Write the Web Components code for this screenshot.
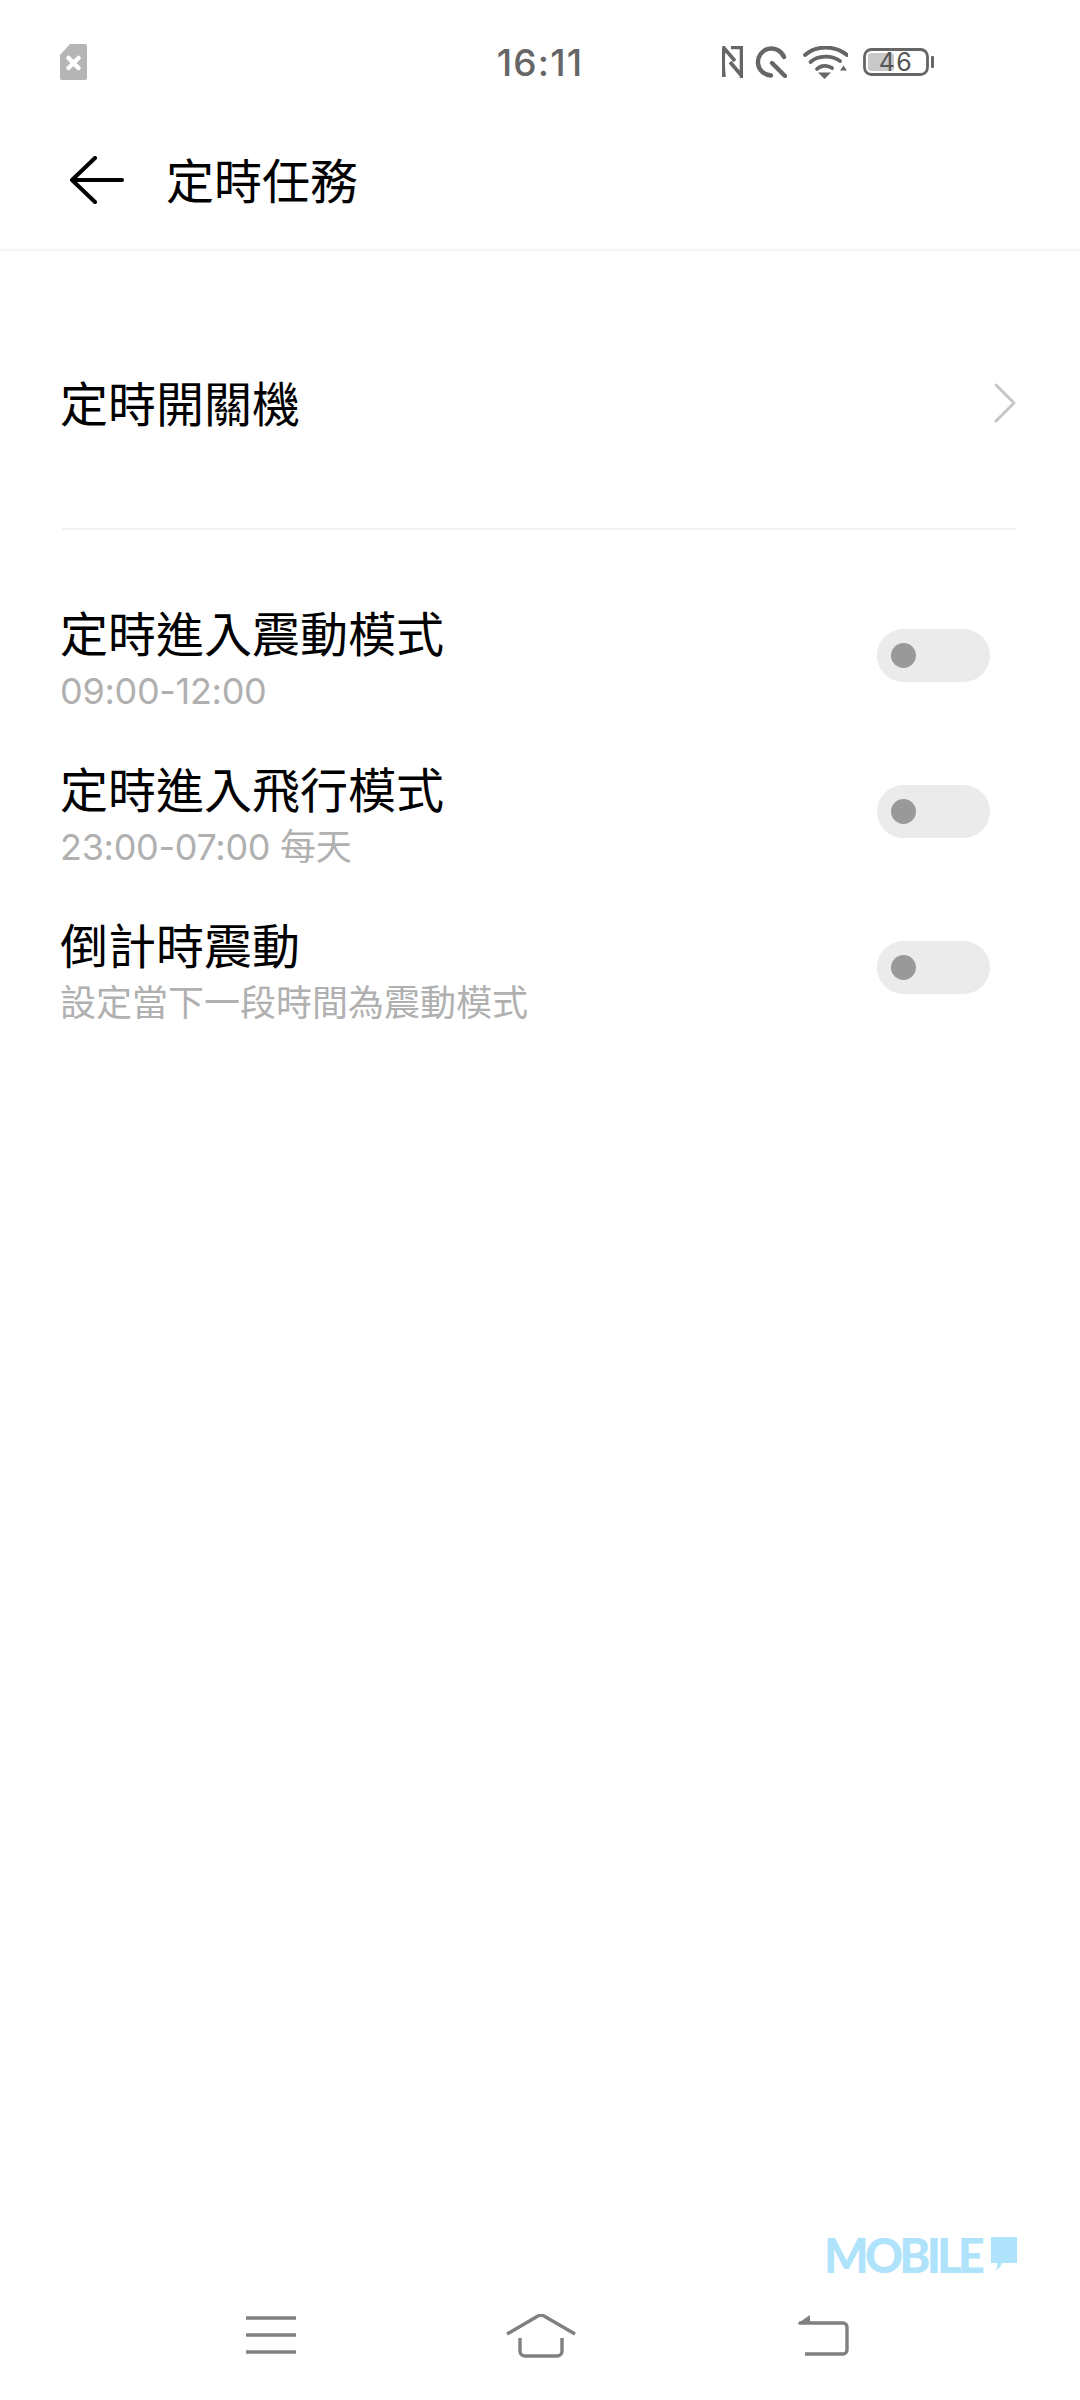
<!DOCTYPE html>
<html lang="zh-Hant">
<head>
<meta charset="utf-8">
<title>定時任務</title>
<style>
  html, body { margin: 0; background: #fff; }
  body { font-family: "Noto Sans CJK TC", "Noto Sans", sans-serif; }
  phone-screen { width: 1080px; height: 2400px; }
</style>
</head>
<body>
<phone-screen>
  <status-bar slot="top" time="16:11" level="46"></status-bar>
  <title-bar slot="top">定時任務</title-bar>
  <link-row>定時開關機</link-row>
  <list-divider></list-divider>
  <switch-row style="margin-top:47px">定時進入震動模式<span slot="sub">09:00-12:00</span></switch-row>
  <switch-row>定時進入飛行模式<span slot="sub">23:00-07:00 每天</span></switch-row>
  <switch-row>倒計時震動<span slot="sub" style="letter-spacing:0">設定當下一段時間為震動模式</span></switch-row>
  <mobile-mark slot="bottom"></mobile-mark>
  <nav-bar slot="bottom"></nav-bar>
</phone-screen>

<script>
{
  const html = String.raw;

  // Small helper, every element here only needs a static shadow root
  function define(name, markup, setup) {
    customElements.define(name, class extends HTMLElement {
      constructor() {
        super();
        this.attachShadow({ mode: "open" });
        this.shadowRoot.innerHTML = markup;
      }
      connectedCallback() {
        if (setup) setup(this);
      }
    });
  }

  define("phone-screen", html`
    <style>
      :host { display: flex; flex-direction: column; overflow: hidden; background: #fff; color: #000; }
      main { flex: 1; display: flex; flex-direction: column; padding-top: 61px; }
    </style>
    <slot name="top"></slot>
    <main><slot></slot></main>
    <slot name="bottom"></slot>
  `);

  define("status-bar", html`
    <style>
      :host { display: grid; grid-template-columns: 1fr auto 1fr; align-items: center; height: 124px; box-sizing: border-box; padding: 0 60px; color: #666; }
      .time { font: 500 37px/1 Inter, Roboto, sans-serif; letter-spacing: 1.2px; }
      .icons { display: flex; align-items: center; justify-content: flex-end; height: 40px; padding-right: 85px; }
      svg { display: block; }
      .nfc { margin-right: 12px; }
      .q { margin-right: 16px; }
      .wifi { margin-right: 15px; }
      .battery { position: relative; width: 72px; height: 28px; }
      .level { position: absolute; left: 5px; width: 56px; top: 0; height: 28px; text-align: center; font: 400 25px/29px Inter, Roboto, sans-serif; letter-spacing: 1.5px; color: #555; }
    </style>
    <svg width="27" height="36" viewBox="0 0 27 36">
      <path d="M10 0h15a2 2 0 0 1 2 2v32a2 2 0 0 1-2 2H2a2 2 0 0 1-2-2V11z" fill="#b5b5b5"/>
      <path d="M8.500 14l10 10M18.500 14l-10 10" stroke="#fff" stroke-width="4.500" stroke-linecap="round"/>
    </svg>
    <span class="time"></span>
    <div class="icons">
      <svg class="nfc" width="21" height="32" viewBox="0 0 21 32" fill="none" stroke="#666" stroke-width="3.600">
        <path d="M2 31C1 22 1 10 2 2L13 15"/>
        <path d="M19.500 32V1.500H9"/>
        <path d="M8 16L19 29"/>
      </svg>
      <svg class="q" width="32" height="32" viewBox="0 0 32 32" fill="none" stroke="#666" stroke-width="4.400" stroke-linecap="round">
        <path d="M29 11A13.500 13.500 0 1 0 16 29.500"/>
        <path d="M17 17L30 30"/>
      </svg>
      <svg class="wifi" width="45" height="33" viewBox="0 0 45 33" fill="none" stroke="#666" stroke-width="3.800" stroke-linecap="round">
        <path d="M2 9C13 -1 32 -1 44 9"/>
        <path d="M7.500 16C15 9 29 9 37 15"/>
        <path d="M14 23C18 19 25 19 29 22"/>
        <path d="M15 26.500h13l-6.500 6.500z" fill="#666" stroke="none"/>
        <path d="M37 24.500h7l-3.500-5z" fill="#666" stroke="none"/>
      </svg>
      <div class="battery">
        <svg width="72" height="28" viewBox="0 0 72 28">
          <rect x="5" y="5" width="26" height="18" rx="3" fill="#c9c9c9"/>
          <rect x="1.500" y="1.500" width="63" height="25" rx="7" fill="none" stroke="#666" stroke-width="2.800"/>
          <rect x="68" y="8" width="3" height="12" rx="1" fill="#666"/>
        </svg>
        <span class="level"></span>
      </div>
    </div>
  `, (el) => {
    el.shadowRoot.querySelector(".time").textContent = el.getAttribute("time");
    el.shadowRoot.querySelector(".level").textContent = el.getAttribute("level");
  });

  define("title-bar", html`
    <style>
      :host { display: flex; align-items: center; height: 127px; box-sizing: border-box; padding: 0 0 13px 70px; border-bottom: 2px solid #f5f5f5; }
      svg { display: block; margin-right: 42px; }
      span { font-size: 48px; line-height: 60px; margin-top: -4px; }
    </style>
    <svg width="54" height="48" viewBox="0 0 54 48" fill="none" stroke="#000" stroke-width="4" stroke-linecap="round" stroke-linejoin="round">
      <path d="M52 24H3"/>
      <path d="M25 2L2 24l23 22"/>
    </svg>
    <span><slot></slot></span>
  `);

  define("link-row", html`
    <style>
      :host { display: flex; align-items: center; justify-content: space-between; height: 184px; padding: 0 63px 0 60px; font-size: 48px; }
      svg { display: block; margin-top: -2px; }
      span { margin-top: -6px; }
    </style>
    <span><slot></slot></span>
    <svg width="24" height="40" viewBox="0 0 24 40" fill="none" stroke="#c6c6c6" stroke-width="3" stroke-linecap="round" stroke-linejoin="round">
      <path d="M3 2l18 18L3 38"/>
    </svg>
  `);

  define("list-divider", html`
    <style>
      :host { display: block; height: 2px; margin: 32px 63px 0 62px; background: #f4f4f4; }
    </style>
  `);

  define("toggle-switch", html`
    <style>
      :host { display: block; width: 113px; height: 53px; box-sizing: border-box; padding: 14px; border-radius: 27px; background: #ebebeb; }
      i { display: block; width: 25px; height: 25px; border-radius: 50%; background: #999; }
    </style>
    <i></i>
  `);

  define("switch-row", html`
    <style>
      :host { display: flex; align-items: center; justify-content: space-between; height: 156px; padding: 0 90px 0 60px; }
      .title { font-size: 48px; line-height: 64px; margin-bottom: 7px; }
      .sub { font: 36px/42px Inter, "Noto Sans CJK TC", sans-serif; letter-spacing: -0.3px; color: #b0b0b0; }
    </style>
    <div>
      <div class="title"><slot></slot></div>
      <div class="sub"><slot name="sub"></slot></div>
    </div>
    <toggle-switch></toggle-switch>
  `);

  define("mobile-mark", html`
    <style>
      :host { display: flex; align-items: flex-start; justify-content: flex-end; gap: 7px; height: 36px; padding-right: 63px; color: #aee3fb; }
      span { font: 900 47px/36px Lato, "Liberation Sans", sans-serif; letter-spacing: -3.8px; padding-right: 3px; }
      svg { display: block; }
    </style>
    <span>MOBILE</span>
    <svg width="26" height="34" viewBox="0 0 26 34"><path d="M0 0h26v26H11C10 29 8 32 4 34c2-3 3-5 2-8H0z" fill="currentColor"/></svg>
  `);

  define("nav-bar", html`
    <style>
      :host { display: grid; grid-template-columns: repeat(3, auto); justify-content: start; height: 127px; box-sizing: border-box; padding: 41px 0 0 246px; }
      svg { display: block; }
      .home { margin-left: 210px; }
      .back { margin-left: 221px; }
    </style>
    <svg width="50" height="40" viewBox="0 0 50 40" stroke="#808080" stroke-width="3.600" fill="none">
      <path d="M0 4h50M0 21h50M0 38h50"/>
    </svg>
    <svg class="home" width="70" height="44" viewBox="0 0 70 44" stroke="#808080" stroke-width="3.400" fill="none" stroke-linejoin="round">
      <path d="M1 20L32 2a6 6 0 0 1 6 0l31 18"/>
      <path d="M14 24v13a5 5 0 0 0 5 5h32a5 5 0 0 0 5-5V24"/>
    </svg>
    <svg class="back" width="52" height="42" viewBox="0 0 52 42" stroke="#808080" stroke-width="3.400" fill="none">
      <path d="M2 9h44a4 4 0 0 1 4 4v23a4 4 0 0 1-4 4H8"/>
      <path d="M0 10L13 1v9z" fill="#808080" stroke="none"/>
    </svg>
  `);
}
</script>
</body>
</html>
